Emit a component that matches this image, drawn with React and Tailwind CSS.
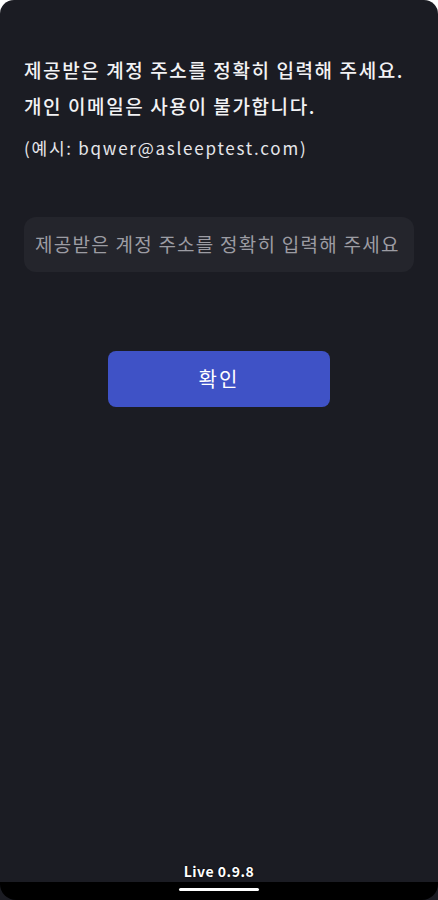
export default function App() {
  const font = { fontFamily: '"Noto Sans CJK KR", "Noto Sans", sans-serif' };

  return (
    <div className="w-[438px] h-[900px] bg-white" style={font}>
      <div className="h-full bg-[#1b1c23] rounded-t-[14px] flex flex-col overflow-hidden">
        <div className="px-6 pt-[52px]">
          <p className="text-[19px] leading-[36px] font-medium text-[#f2f2f4] tracking-[1.6px] whitespace-nowrap">
            제공받은 계정 주소를 정확히 입력해 주세요.
          </p>
          <p className="text-[19px] leading-[36px] font-medium text-[#f2f2f4] tracking-[1.6px] whitespace-nowrap">
            개인 이메일은 사용이 불가합니다.
          </p>
          <p className="mt-[6px] text-[17px] leading-[36px] text-[#e6e6ea] tracking-[1.75px] whitespace-nowrap">
            (예시: bqwer@asleeptest.com)
          </p>

          <div className="mt-[51px] h-[55px] rounded-[12px] bg-[#24252c] flex items-center px-[11px]">
            <input
              className="w-full bg-transparent outline-none text-[19px] text-[#e6e6ea] placeholder:text-[#9c9ca3] tracking-[1.25px]"
              placeholder="제공받은 계정 주소를 정확히 입력해 주세요"
              style={font}
            />
          </div>

          <div className="mt-[79px] flex justify-center">
            <button className="w-[222px] h-[56px] rounded-[8px] bg-[#3f52c6] text-white text-[20px] tracking-[2px]" style={font}>
              확인
            </button>
          </div>
        </div>

        <div className="flex-1" />

        <div className="flex justify-center pb-[1px]">
          <span className="text-[14px] leading-[19px] font-bold text-white tracking-[0.5px] [text-shadow:0_0_2px_#000]">Live 0.9.8</span>
        </div>
        <div className="h-[18px] bg-black rounded-b-[16px] flex justify-center pt-[6px]">
          <div className="w-[80px] h-[3px] rounded-full bg-white" />
        </div>
      </div>
    </div>
  );
}
